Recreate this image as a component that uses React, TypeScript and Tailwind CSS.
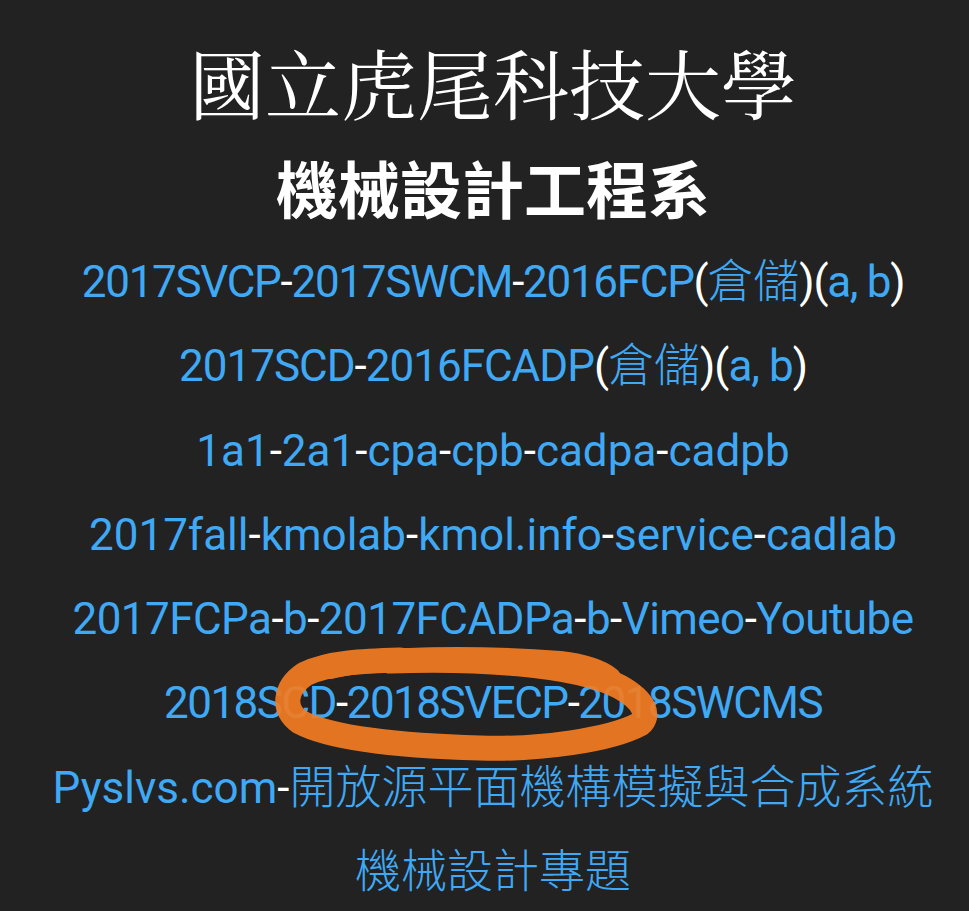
const latin = "font-['Roboto','Noto_Sans_CJK_TC',sans-serif]";

function A({ children, cjk = false }: { children: React.ReactNode; cjk?: boolean }) {
    return (
        <span
            className={`text-[#3fa9f5] ${cjk ? "font-['Noto_Sans_CJK_TC',sans-serif] text-[46px] font-light leading-none tracking-normal" : ''}`}
        >
            {children}
        </span>
    );
}

function W({ children }: { children: React.ReactNode }) {
    return <span className="text-white">{children}</span>;
}

export default function App() {
    return (
        <div className="relative min-h-[911px] w-full overflow-hidden bg-[#222222] text-center">
            <div className="flex flex-col items-center pl-[17px] pt-[37px]">
                <h1 className="font-['Noto_Serif_CJK_TC','Noto_Sans_CJK_TC',serif] text-[76px] font-normal leading-[90px] text-white">
                    國立虎尾科技大學
                </h1>
                <h2 className="mt-[24px] font-['Noto_Sans_CJK_TC',sans-serif] text-[62px] font-bold leading-[72px] text-white">
                    機械設計工程系
                </h2>
                <div className={`mt-[17px] flex flex-col items-center text-[44px] leading-[84.3px] ${latin}`}>
                    <div className="h-[84.3px] whitespace-nowrap tracking-[-1.3px]">
                        <A>2017SVCP</A><W>-</W><A>2017SWCM</A><W>-</W><A>2016FCP</A>
                        <W>(</W><A cjk>倉儲</A><W>)</W><W>(</W><A>a, b</A><W>)</W>
                    </div>
                    <div className="h-[84.3px] whitespace-nowrap tracking-[-1px]">
                        <A>2017SCD</A><W>-</W><A>2016FCADP</A>
                        <W>(</W><A cjk>倉儲</A><W>)</W><W>(</W><A>a, b</A><W>)</W>
                    </div>
                    <div className="h-[84.3px] whitespace-nowrap">
                        <A>1a1</A><W>-</W><A>2a1</A><W>-</W><A>cpa</A><W>-</W><A>cpb</A><W>-</W><A>cadpa</A><W>-</W><A>cadpb</A>
                    </div>
                    <div className="h-[84.3px] whitespace-nowrap">
                        <A>2017fall</A><W>-</W><A>kmolab</A><W>-</W><A>kmol.info</A><W>-</W><A>service</A><W>-</W><A>cadlab</A>
                    </div>
                    <div className="h-[84.3px] whitespace-nowrap tracking-[-0.55px]">
                        <A>2017FCPa</A><W>-</W><A>b</A><W>-</W><A>2017FCADPa</A><W>-</W><A>b</A><W>-</W><A>Vimeo</A><W>-</W><A>Youtube</A>
                    </div>
                    <div className="h-[84.3px] whitespace-nowrap tracking-[-1.5px]">
                        <A>2018SCD</A><W>-</W><A>2018SVECP</A><W>-</W><A>2018SWCMS</A>
                    </div>
                    <div className="h-[84.3px] whitespace-nowrap">
                        <A>Pyslvs.com</A><W>-</W><A cjk>開放源平面機構模擬與合成系統</A>
                    </div>
                    <div className="h-[84.3px] whitespace-nowrap">
                        <A cjk>機械設計專題</A>
                    </div>
                </div>
            </div>
            {/* hand-drawn marker circle */}
            <svg className="pointer-events-none absolute left-0 top-0" width="969" height="911" viewBox="0 0 969 911">
                <g fill="none" stroke="#f47d22" strokeLinecap="round" strokeLinejoin="round" opacity="0.92">
                    <path
                        d="M 390 661 C 470 658, 575 663, 620 687 C 645 701, 650 716, 640 724 C 610 740, 540 750, 480 748 C 400 746, 330 738, 300 722 C 282 710, 284 688, 305 674 C 330 662, 365 661, 400 660"
                        strokeWidth="25"
                    />
                    <path d="M 330 668 C 380 656, 480 656, 560 662 C 585 665, 600 670, 610 678" strokeWidth="22" />
                </g>
            </svg>
        </div>
    );
}
